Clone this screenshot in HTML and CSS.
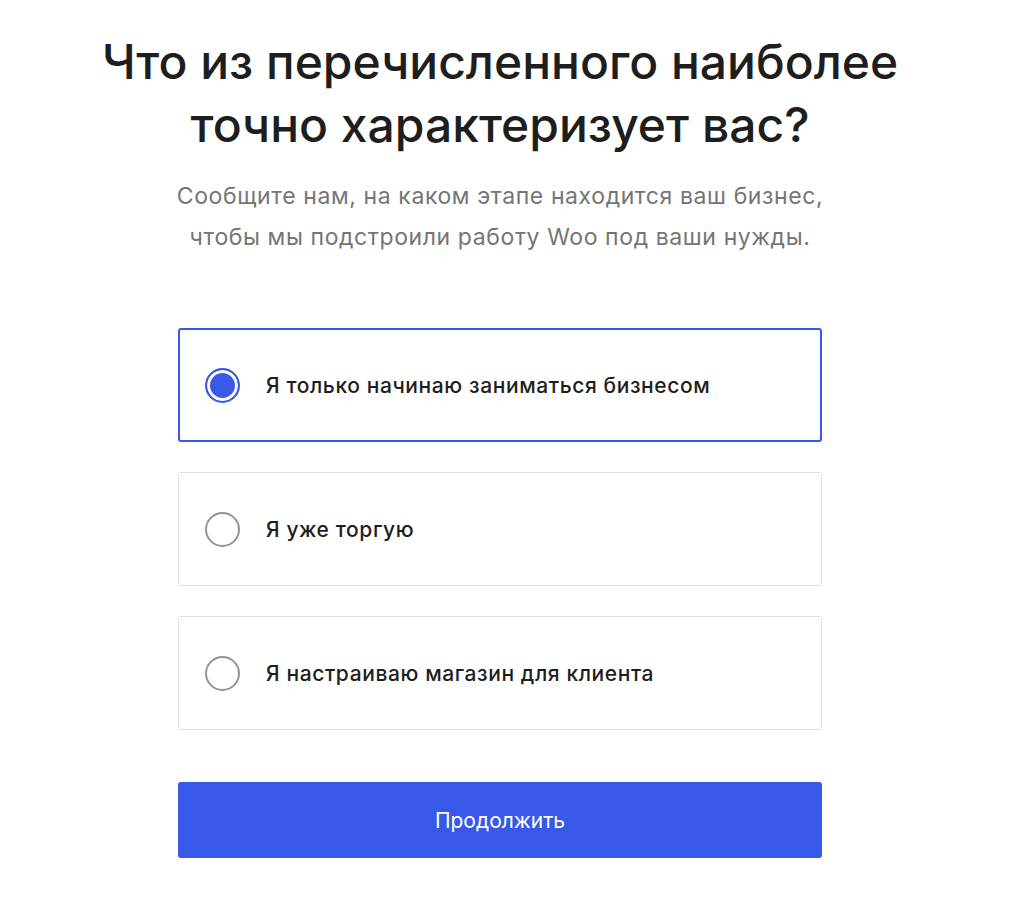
FILE: index.html
```html
<!DOCTYPE html>
<html lang="ru">
<head>
    <meta charset="UTF-8">
    <title>Что из перечисленного наиболее точно характеризует вас?</title>
    <link rel="stylesheet" href="styles.css">
</head>
<body>
    <div class="page">
        <div class="header">
            <h1>Что из перечисленного наиболее точно характеризует вас?</h1>
            <p>Сообщите нам, на каком этапе находится ваш бизнес, чтобы мы подстроили работу Woo под ваши нужды.</p>
        </div>

        <form class="options">
            <label class="option selected">
                <span class="radio"></span>
                <span class="option-label">Я только начинаю заниматься бизнесом</span>
            </label>
            <label class="option">
                <span class="radio"></span>
                <span class="option-label">Я уже торгую</span>
            </label>
            <label class="option">
                <span class="radio"></span>
                <span class="option-label">Я настраиваю магазин для клиента</span>
            </label>

            <button type="button" class="btn">Продолжить</button>
        </form>
    </div>
</body>
</html>
```

FILE: styles.css
```css
* {
    margin: 0;
    padding: 0;
    box-sizing: border-box;
}

body {
    font-family: Inter, "Noto Sans", sans-serif;
    background: #fff;
    color: #1e1e1e;
}

.page {
    width: 1000px;
    padding-top: 30px;
}

.header {
    text-align: center;
    margin: 0 auto;
    width: 860px;
}

.header h1 {
    font-size: 48px;
    font-weight: 500;
    line-height: 63px;
    letter-spacing: 0;
}

.header p {
    margin: 20px auto 0;
    width: 690px;
    font-size: 23px;
    line-height: 41px;
    letter-spacing: 0.6px;
    color: #757575;
}

.options {
    width: 644px;
    margin: 70px auto 0;
    display: flex;
    flex-direction: column;
    gap: 30px;
}

.option {
    display: flex;
    align-items: center;
    gap: 26px;
    height: 114px;
    padding: 0 26px;
    border: 1px solid #e0e0e0;
    border-radius: 3px;
    cursor: pointer;
}

.option.selected {
    border: 2px solid #3858e9;
    padding: 0 25px;
}

.radio {
    width: 35px;
    height: 35px;
    border: 2px solid #949494;
    border-radius: 50%;
    flex-shrink: 0;
}

.selected .radio {
    border-color: #3858e9;
    background: #3858e9;
    box-shadow: inset 0 0 0 3px #fff;
}

.option-label {
    font-size: 21px;
    font-weight: 500;
    letter-spacing: 0.6px;
    color: #1e1e1e;
}

.btn {
    margin-top: 22px;
    height: 76px;
    background: #3858e9;
    color: white;
    border: none;
    border-radius: 3px;
    font-family: Inter, sans-serif;
    font-size: 21px;
    cursor: pointer;
}
```
